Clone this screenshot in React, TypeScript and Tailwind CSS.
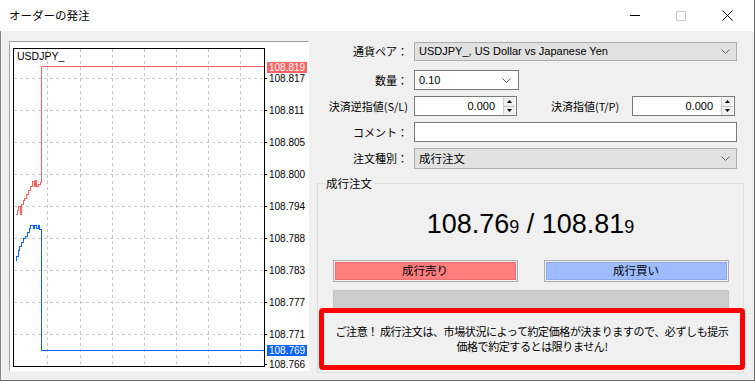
import React from "react";

const jp = "font-['Noto_Sans_CJK_JP',sans-serif]";
const lat = "font-['Liberation_Sans','Noto_Sans_CJK_JP',sans-serif]";

const vLines = [46, 79, 111, 143, 175, 207, 239];
const hLines = [
  { y: 78, label: "108.817" },
  { y: 110, label: "108.811" },
  { y: 142, label: "108.805" },
  { y: 174, label: "108.800" },
  { y: 206, label: "108.794" },
  { y: 238, label: "108.788" },
  { y: 270, label: "108.783" },
  { y: 302, label: "108.777" },
  { y: 334, label: "108.771" },
];

const redPath =
  "M14 214 L16 214 L16 210 L17 210 L17 206 L19 206 L19 214 L20 214 L20 204 L22 204 L22 200 L23 200 L23 198 L25 198 L25 194 L27 194 L27 190 L29 190 L29 186 L31 186 L31 181 L33 181 L33 186 L34 186 L34 180 L35 180 L35 186 L37 186 L37 184 L39 184 L39 182 L40 182 L40 66 L263 66";
const bluePath =
  "M14 260 L15 260 L15 256 L17 256 L17 250 L18 250 L18 246 L20 246 L20 242 L22 242 L22 238 L24 238 L24 236 L26 236 L26 232 L28 232 L28 228 L29 228 L29 225 L32 225 L32 228 L33 228 L33 225 L35 225 L35 228 L37 228 L37 225 L38 225 L38 229 L40 229 L40 350 L263 350";

const Chart = () => (
  <div className="ml-[8px] mt-[10px] w-[300px] h-[330px] border border-t-[#a0a0a0] border-l-[#a0a0a0] border-r-white border-b-white bg-white">
    <svg width="298" height="328" viewBox="9 42 298 328" shapeRendering="crispEdges" className="block">
      <rect x="9" y="42" width="298" height="328" fill="#ffffff" />
      {vLines.map((x) => (
        <line key={x} x1={x + 0.5} y1="49" x2={x + 0.5} y2="366" stroke="#c8c8c8" strokeDasharray="3 3" />
      ))}
      {hLines.map((h) => (
        <line key={h.y} x1="13" y1={h.y + 0.5} x2="263" y2={h.y + 0.5} stroke="#c8c8c8" strokeDasharray="3 3" />
      ))}
      <path d={redPath} transform="translate(0.5 0.5)" fill="none" stroke="#ff5f5f" strokeWidth="1" />
      <path d={bluePath} transform="translate(0.5 0.5)" fill="none" stroke="#0a64ff" strokeWidth="1" />
      <rect x="12.5" y="48.5" width="251" height="318" fill="none" stroke="#000" strokeWidth="1" />
      {hLines.map((h) => (
        <g key={"t" + h.y}>
          <line x1="263" y1={h.y + 0.5} x2="266" y2={h.y + 0.5} stroke="#000" />
          <text x="268" y={h.y + 4} fontSize="10" fontFamily="Liberation Sans, sans-serif" fill="#000">
            {h.label}
          </text>
        </g>
      ))}
      <line x1="263" y1="364.5" x2="266" y2="364.5" stroke="#000" />
      <text x="268" y="368" fontSize="10" fontFamily="Liberation Sans, sans-serif" fill="#000">
        108.766
      </text>
      <rect x="266" y="62" width="40" height="11" fill="#ff6464" />
      <text x="268" y="71" fontSize="10" fontFamily="Liberation Sans, sans-serif" fill="#fff">
        108.819
      </text>
      <rect x="266" y="345" width="40" height="11" fill="#0a64ff" />
      <text x="268" y="354" fontSize="10" fontFamily="Liberation Sans, sans-serif" fill="#fff">
        108.769
      </text>
      <text x="16" y="60" fontSize="10.5" fontFamily="Liberation Sans, sans-serif" fill="#000">
        USDJPY_
      </text>
    </svg>
  </div>
);

const Chevron = () => (
  <svg width="9" height="5" viewBox="0 0 9 5" className="shrink-0">
    <path d="M0.5 0.5 L4.5 4.5 L8.5 0.5" fill="none" stroke="#606060" strokeWidth="1" />
  </svg>
);

const Spinner = () => (
  <div className="flex flex-col w-[12px] h-[18px] mr-[1px] border-l border-[#d0d0d0] bg-[#f0f0f0]">
    <div className="flex-1 flex items-center justify-center border-b border-[#c0c0c0]">
      <svg width="5" height="3" viewBox="0 0 5 3"><path d="M0 3 L2.5 0 L5 3 Z" fill="#000" /></svg>
    </div>
    <div className="flex-1 flex items-center justify-center">
      <svg width="5" height="3" viewBox="0 0 5 3"><path d="M0 0 L2.5 3 L5 0 Z" fill="#000" /></svg>
    </div>
  </div>
);

const Label = ({ children }: { children: React.ReactNode }) => (
  <div className={`w-[100px] text-right text-[11px] pr-[1px] ${jp} text-black`}>{children}</div>
);

const NumberInput = () => (
  <div className="ml-[5px] w-[103px] h-[20px] bg-white border border-[#7a7a7a] flex items-center">
    <span className={`flex-1 text-right pr-[8px] text-[11px] ${lat}`}>0.000</span>
    <Spinner />
  </div>
);

export default function App() {
  return (
    <div className="w-[755px] h-[381px] overflow-hidden bg-[#f0f0f0] flex flex-col relative">
      {/* title bar */}
      <div className="h-[31px] bg-white flex items-center shrink-0 border-r border-[#6a6a6a]">
        <span className={`ml-[9px] text-[11.5px] text-black ${jp}`}>オーダーの発注</span>
        <div className="ml-auto flex items-center h-full">
          <div className="w-[46px] flex justify-center">
            <div className="w-[10px] h-px bg-black" />
          </div>
          <div className="w-[46px] flex justify-center">
            <div className="w-[10px] h-[10px] border border-[#cccccc]" />
          </div>
          <div className="w-[46px] flex justify-center mr-[4px]">
            <svg width="11" height="11" viewBox="0 0 11 11">
              <path d="M0.5 0.5 L10.5 10.5 M10.5 0.5 L0.5 10.5" stroke="#000" strokeWidth="1" />
            </svg>
          </div>
        </div>
      </div>

      {/* body */}
      <div className="flex-1 flex border-l border-r border-b border-l-[#8a8a8a] border-r-[#6a6a6a] border-b-[#6a6a6a]">
        <Chart />

        <div className="flex-1 flex flex-col pt-[11px]">
          <div className="flex items-center h-[19px]">
            <Label>通貨ペア：</Label>
            <div className="ml-[5px] w-[323px] h-[19px] bg-[#e1e1e1] border border-[#adadad] flex items-center pl-[4px] pr-[6px]">
              <span className={`flex-1 text-[11px] ${lat}`}>USDJPY_, US Dollar vs Japanese Yen</span>
              <Chevron />
            </div>
          </div>

          <div className="flex items-center h-[20px] mt-[9px]">
            <Label>数量：</Label>
            <div className="ml-[5px] w-[105px] h-[20px] bg-white border border-[#7a7a7a] flex items-center pl-[4px] pr-[7px]">
              <span className={`flex-1 text-[11px] ${lat}`}>0.10</span>
              <Chevron />
            </div>
          </div>

          <div className="flex items-center h-[20px] mt-[6px]">
            <Label>決済逆指値(S/L)</Label>
            <NumberInput />
            <div className={`ml-[34px] w-[76px] text-[11px] ${jp}`}>決済指値(T/P)</div>
            <NumberInput />
          </div>

          <div className="flex items-center h-[20px] mt-[6px]">
            <Label>コメント：</Label>
            <div className="ml-[5px] w-[323px] h-[20px] bg-white border border-[#7a7a7a]" />
          </div>

          <div className="flex items-center h-[21px] mt-[6px]">
            <Label>注文種別：</Label>
            <div className="ml-[5px] w-[323px] h-[21px] bg-[#e1e1e1] border border-[#adadad] flex items-center pl-[4px] pr-[6px]">
              <span className={`flex-1 text-[11.5px] ${jp}`}>成行注文</span>
              <Chevron />
            </div>
          </div>

          {/* group box */}
          <div className="relative ml-[8px] mt-[14px] w-[427px] h-[190px] border border-[#dcdcdc] flex flex-col items-center">
            <span className={`absolute -top-[9px] left-[6px] px-[2px] bg-[#f0f0f0] text-[11.5px] leading-[16px] ${jp}`}>
              成行注文
            </span>
            <div className={`mt-[25px] ${lat} text-[27px] leading-[31px] text-black`}>
              108.76<span className="text-[18px]">9</span> / 108.81<span className="text-[18px]">9</span>
            </div>
            <div className="mt-[17px] flex gap-[26px]">
              <div className="w-[185px] h-[22px] border border-[#adadad] p-px">
                <div className={`h-full bg-[#ff7f7f] border border-[#f06c6c] flex items-center justify-center text-[11.5px] ${jp}`}>
                  成行売り
                </div>
              </div>
              <div className="w-[185px] h-[22px] border border-[#adadad] p-px">
                <div className={`h-full bg-[#9ebcff] border border-[#88a8f0] flex items-center justify-center text-[11.5px] ${jp}`}>
                  成行買い
                </div>
              </div>
            </div>
            <div className="mt-[8px] w-[396px] h-[22px] bg-[#cccccc] border border-[#c4c4c4]" />
          </div>
        </div>
      </div>

      {/* warning annotation */}
      <div className="absolute left-[319px] top-[308px] w-[426px] h-[62px] border-[5px] border-[#ff0000] rounded-[4px] bg-[#f0f0f0] flex flex-col items-center justify-center">
        <p className={`text-[11px] leading-[15px] text-center text-black ${jp} tracking-[-0.4px]`}>
          ご注意！ 成行注文は、市場状況によって約定価格が決まりますので、必ずしも提示
          <br />
          価格で約定するとは限りません!
        </p>
      </div>
    </div>
  );
}
